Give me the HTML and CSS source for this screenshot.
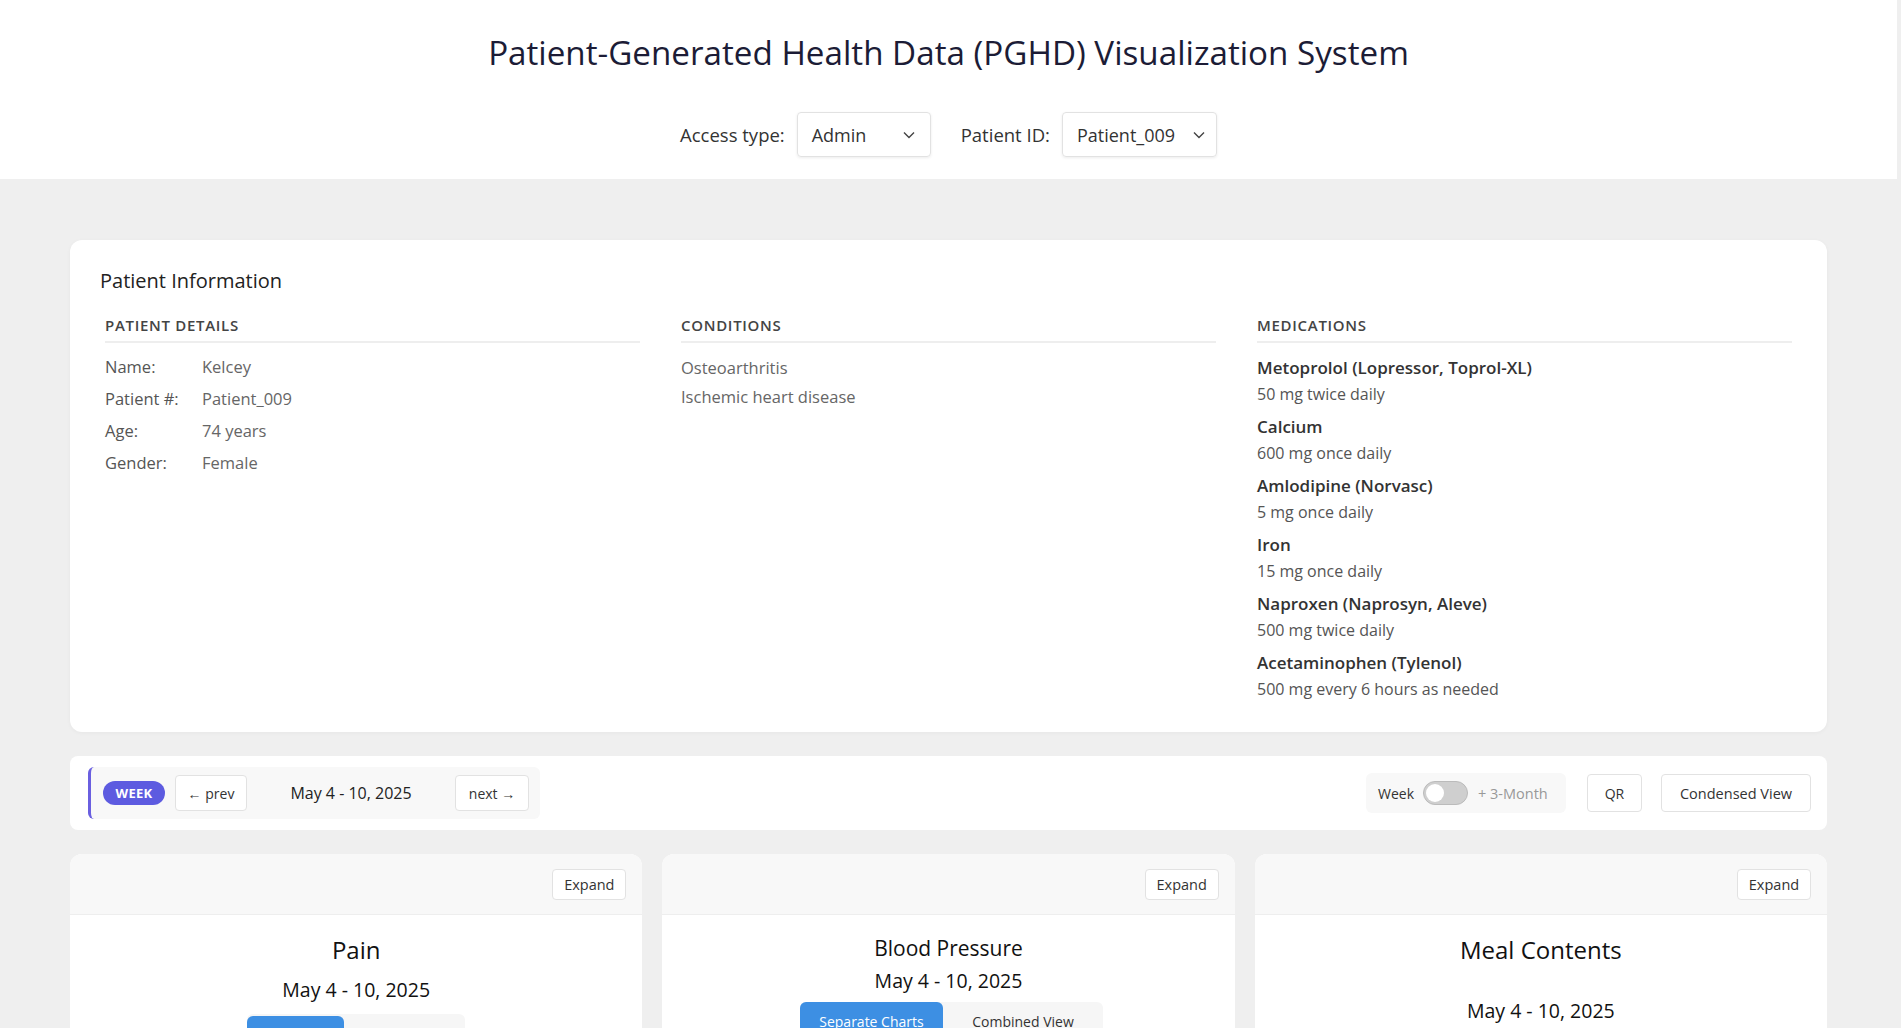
FILE: index.html
```html
<html>
<head>
    <title>PGHD Visualization System</title>
    <link rel="stylesheet" href="styles.css">
</head>
<body>
    <header class="top">
        <h1>Patient-Generated Health Data (PGHD) Visualization System</h1>
        <div class="controls">
            <label class="ctl-label">Access type:</label>
            <div class="select sel-access">
                <span>Admin</span>
                <svg width="14" height="14" viewBox="0 0 14 14"><path d="M2 4.5l5 5 5-5" fill="none" stroke="#444" stroke-width="1.4"/></svg>
            </div>
            <label class="ctl-label">Patient ID:</label>
            <div class="select sel-patient">
                <span>Patient_009</span>
                <svg width="14" height="14" viewBox="0 0 14 14"><path d="M2 4.5l5 5 5-5" fill="none" stroke="#444" stroke-width="1.4"/></svg>
            </div>
        </div>
    </header>

    <main class="content">
        <section class="card info">
            <h2>Patient Information</h2>
            <div class="info-grid">
                <div class="info-col">
                    <h3>Patient Details</h3>
                    <div class="detail"><span class="key">Name:</span><span class="val">Kelcey</span></div>
                    <div class="detail"><span class="key">Patient #:</span><span class="val">Patient_009</span></div>
                    <div class="detail"><span class="key">Age:</span><span class="val">74 years</span></div>
                    <div class="detail"><span class="key">Gender:</span><span class="val">Female</span></div>
                </div>
                <div class="info-col">
                    <h3>Conditions</h3>
                    <div class="cond">Osteoarthritis</div>
                    <div class="cond">Ischemic heart disease</div>
                </div>
                <div class="info-col">
                    <h3>Medications</h3>
                    <div class="med"><div class="med-name">Metoprolol (Lopressor, Toprol-XL)</div><div class="med-dose">50 mg twice daily</div></div>
                    <div class="med"><div class="med-name">Calcium</div><div class="med-dose">600 mg once daily</div></div>
                    <div class="med"><div class="med-name">Amlodipine (Norvasc)</div><div class="med-dose">5 mg once daily</div></div>
                    <div class="med"><div class="med-name">Iron</div><div class="med-dose">15 mg once daily</div></div>
                    <div class="med"><div class="med-name">Naproxen (Naprosyn, Aleve)</div><div class="med-dose">500 mg twice daily</div></div>
                    <div class="med"><div class="med-name">Acetaminophen (Tylenol)</div><div class="med-dose">500 mg every 6 hours as needed</div></div>
                </div>
            </div>
        </section>

        <section class="toolbar">
            <div class="range">
                <span class="pill">WEEK</span>
                <button class="btn nav-prev">&larr; prev</button>
                <span class="range-date">May 4 - 10, 2025</span>
                <button class="btn nav-next">next &rarr;</button>
            </div>
            <div class="tools">
                <div class="mode">
                    <span class="mode-week">Week</span>
                    <span class="switch"><span class="knob"></span></span>
                    <span class="mode-month">+ 3-Month</span>
                </div>
                <button class="btn btn-qr">QR</button>
                <button class="btn btn-condensed">Condensed View</button>
            </div>
        </section>

        <section class="charts">
            <div class="chart-card">
                <div class="chart-head"><button class="btn btn-expand">Expand</button></div>
                <div class="chart-body">
                    <div class="chart-title">Pain</div>
                    <div class="chart-date">May 4 - 10, 2025</div>
                    <div class="seg seg-pain">
                        <button class="seg-btn active">Line</button>
                        <button class="seg-btn">Heatmap</button>
                    </div>
                </div>
            </div>
            <div class="chart-card">
                <div class="chart-head"><button class="btn btn-expand">Expand</button></div>
                <div class="chart-body bp">
                    <div class="chart-title">Blood Pressure</div>
                    <div class="chart-date">May 4 - 10, 2025</div>
                    <div class="seg">
                        <button class="seg-btn active">Separate Charts</button>
                        <button class="seg-btn">Combined View</button>
                    </div>
                </div>
            </div>
            <div class="chart-card">
                <div class="chart-head"><button class="btn btn-expand">Expand</button></div>
                <div class="chart-body meal">
                    <div class="chart-title">Meal Contents</div>
                    <div class="chart-date">May 4 - 10, 2025</div>
                </div>
            </div>
        </section>
    </main>
</body>
</html>
```

FILE: styles.css
```css
body {
    margin: 0;
    padding-right: 4px;
    background: #efefef;
    font-family: "Open Sans", "Noto Sans", sans-serif;
    color: #333;
    overflow: hidden;
}
.top {
    background: white;
    height: 179px;
    box-sizing: border-box;
    padding-top: 26px;
}
h1 {
    margin: 0;
    text-align: center;
    font-size: 33.2px;
    font-weight: 500;
    line-height: 54px;
    color: #1c1c36;
}
.controls {
    display: flex;
    justify-content: center;
    align-items: center;
    margin-top: 32px;
}
.ctl-label {
    font-size: 18.5px;
    font-weight: 500;
    color: #333;
    margin-right: 12px;
}
.select {
    display: flex;
    align-items: center;
    justify-content: space-between;
    box-sizing: border-box;
    height: 45px;
    padding: 0 14px 0 14px;
    border: 1px solid #e2e2e2;
    border-radius: 4px;
    box-shadow: 0 1px 3px rgba(0, 0, 0, 0.08);
    font-size: 18px;
    color: #333;
}
.sel-access {
    width: 134px;
    margin-right: 30px;
}
.sel-patient {
    width: 155px;
    padding-right: 10px;
}
.content {
    padding: 61px 70px 0 70px;
}
.card {
    background: white;
    border-radius: 12px;
    box-shadow: 0 1px 4px rgba(0, 0, 0, 0.04);
}
.info {
    padding: 28px 30px 23px 30px;
}
.info h2 {
    margin: 0;
    font-size: 20px;
    font-weight: 500;
    line-height: 26px;
    color: #222;
}
.info-grid {
    display: grid;
    grid-template-columns: 1fr 1fr 1fr;
    column-gap: 41px;
    padding: 0 5px;
    margin-top: 22px;
}
.info-col h3 {
    margin: 0 0 12px 0;
    padding-bottom: 7px;
    border-bottom: 2px solid #eeeeee;
    font-size: 15px;
    font-weight: 600;
    letter-spacing: 0.7px;
    line-height: 18px;
    text-transform: uppercase;
    color: #444;
}
.detail {
    display: flex;
    font-size: 16.5px;
    line-height: 24px;
    margin-bottom: 8px;
}
.key {
    width: 97px;
    color: #555;
    font-weight: 500;
}
.val {
    color: #666;
}
.cond {
    font-size: 16.5px;
    line-height: 29px;
    color: #666;
    margin-top: -2px;
    margin-bottom: 2px;
}
.med {
    margin-bottom: 7px;
}
.med-name {
    font-size: 17px;
    font-weight: 600;
    color: #333;
    line-height: 26px;
}
.med-dose {
    font-size: 16px;
    color: #555;
    line-height: 26px;
}
.toolbar {
    display: flex;
    justify-content: space-between;
    align-items: center;
    background: white;
    border-radius: 8px;
    margin-top: 24px;
    height: 74px;
    box-sizing: border-box;
    padding: 0 16px 0 18px;
}
.range {
    display: flex;
    align-items: center;
    height: 52px;
    box-sizing: border-box;
    padding: 0 11px 0 12px;
    background: #f8f8f8;
    border-left: 3px solid #6a5fe0;
    border-radius: 6px;
}
.pill {
    background: #5d5be0;
    color: white;
    font-size: 13px;
    font-weight: 700;
    letter-spacing: 0.3px;
    line-height: 24px;
    width: 62px;
    text-align: center;
    border-radius: 12px;
    margin-right: 10px;
}
.btn {
    font-family: inherit;
    background: white;
    border: 1px solid #e2e2e2;
    border-radius: 4px;
    color: #333;
    font-size: 14px;
    cursor: pointer;
    box-sizing: border-box;
    height: 36px;
    padding: 0;
}
.nav-prev {
    width: 72px;
}
.nav-next {
    width: 74px;
}
.range-date {
    width: 188px;
    margin: 0 10px;
    text-align: center;
    font-size: 16px;
    font-weight: 500;
    color: #222;
}
.tools {
    display: flex;
    align-items: center;
}
.mode {
    display: flex;
    align-items: center;
    height: 40px;
    box-sizing: border-box;
    width: 200px;
    padding: 0 12px;
    background: #f8f8f8;
    border-radius: 6px;
    font-size: 14px;
}
.mode-week {
    font-weight: 500;
    color: #333;
}
.switch {
    position: relative;
    display: inline-block;
    width: 45px;
    height: 24px;
    box-sizing: border-box;
    margin: 0 10px 0 9px;
    background: #cfcfcf;
    border: 1px solid #bbb;
    border-radius: 12px;
}
.knob {
    position: absolute;
    left: 2px;
    top: 2px;
    width: 18px;
    height: 18px;
    border-radius: 50%;
    background: white;
}
.mode-month {
    color: #999;
    font-size: 14.5px;
}
.btn-qr {
    width: 55px;
    height: 38px;
    margin-left: 21px;
}
.btn-condensed {
    width: 150px;
    height: 38px;
    margin-left: 19px;
    font-size: 14.5px;
}
.charts {
    display: grid;
    grid-template-columns: 1fr 1fr 1fr;
    column-gap: 20px;
    margin-top: 24px;
}
.chart-card {
    background: white;
    border-radius: 12px;
    overflow: hidden;
    height: 400px;
}
.chart-head {
    display: flex;
    justify-content: flex-end;
    align-items: center;
    height: 61px;
    box-sizing: border-box;
    padding: 0 16px;
    background: #f8f8f8;
    border-bottom: 1px solid #eeeeee;
}
.btn-expand {
    width: 74px;
    height: 31px;
    font-size: 14.5px;
}
.chart-body {
    text-align: center;
    padding-top: 20px;
}
.chart-title {
    font-size: 24px;
    line-height: 30px;
    color: #111;
}
.chart-date {
    font-size: 19.5px;
    line-height: 26px;
    margin-top: 12px;
    color: #111;
}
.seg {
    display: inline-flex;
    margin-top: 10px;
    background: #f6f6f6;
    border-radius: 6px;
}
.seg-btn {
    font-family: inherit;
    border: none;
    background: transparent;
    font-size: 14px;
    color: #333;
    padding: 10px 18px;
    border-radius: 6px;
}
.seg-btn.active {
    background: #3d8fe3;
    color: white;
}
.seg-pain {
    width: 218px;
    margin-top: 11px;
    padding-top: 2px;
}
.seg-pain .seg-btn {
    padding-top: 14px;
    width: 97px;
}
.bp .chart-title {
    font-size: 21px;
    line-height: 28px;
    margin-top: -1px;
}
.bp .chart-date {
    margin-top: 6px;
}
.bp .seg {
    margin-top: 8px;
    margin-left: 6px;
}
.bp .seg-btn.active {
    width: 143px;
}
.bp .seg-btn {
    width: 160px;
}
.meal .chart-date {
    margin-top: 33px;
}
```
